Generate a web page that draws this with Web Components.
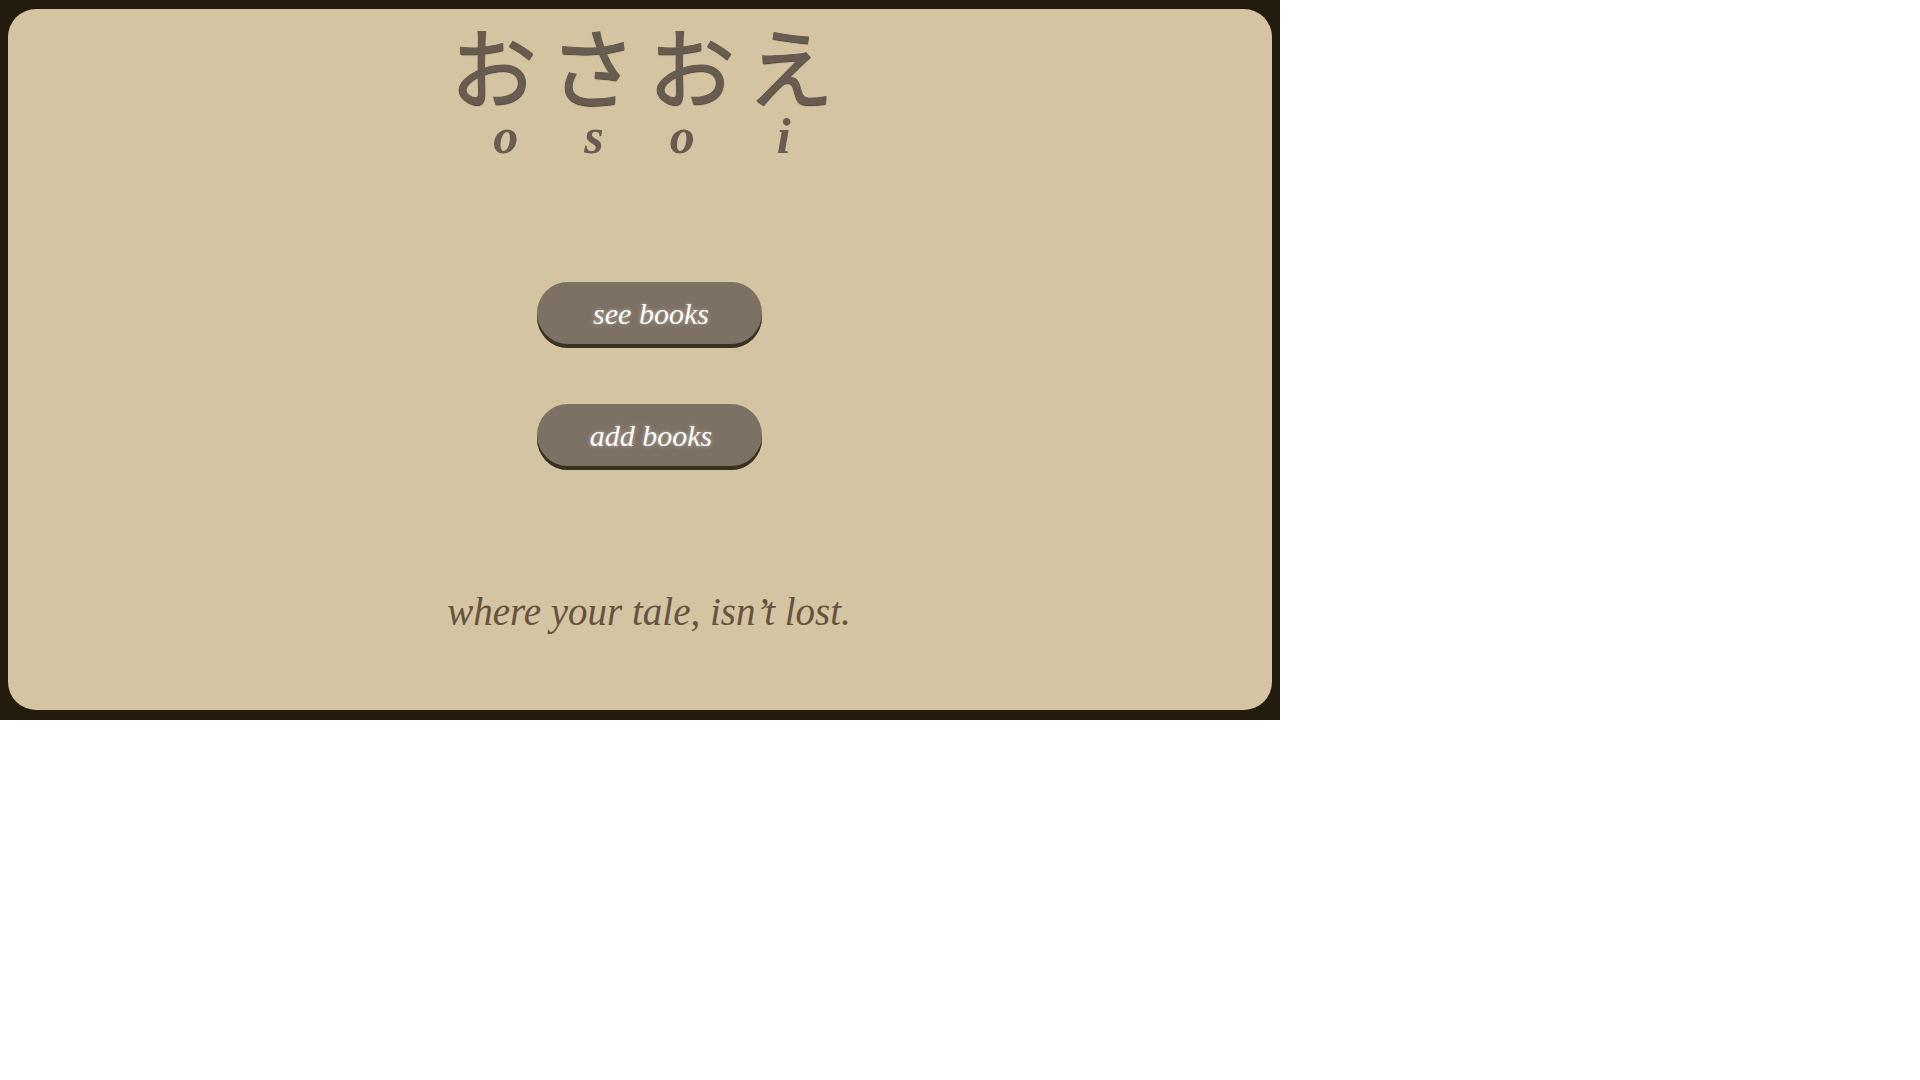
<!DOCTYPE html>
<html lang="ja">
<head>
<meta charset="utf-8">
<title>osoi</title>
<style>
body { margin: 0; background: #fff; font-family: "Liberation Serif", "Noto Sans CJK JP", serif; }
</style>
</head>
<body>
<book-stage>
  <brand-title></brand-title>
  <pill-button>see books</pill-button>
  <pill-button>add books</pill-button>
  <tag-line>where your tale, isn’t lost.</tag-line>
</book-stage>
<script>
const define = (name, html) => customElements.define(name, class extends HTMLElement {
  constructor() {
    super();
    this.attachShadow({ mode: "open" }).innerHTML = html;
  }
});

define("book-stage", `<style>
:host { display: block; box-sizing: border-box; width: calc(100vw * 2 / 3); aspect-ratio: 16 / 9; padding: 9px 8px 10px; background: #231b0d; }
main { box-sizing: border-box; display: flex; flex-direction: column; align-items: center; height: 100%; padding-top: 24px; border-radius: 28px; background: #d5c4a1; }
::slotted(brand-title) { margin-bottom: 120px; }
::slotted(pill-button) { margin-bottom: 56px; margin-left: 18px; }
::slotted(tag-line) { margin-top: 64px; margin-left: 18px; }
</style><main><slot></slot></main>`);

define("brand-title", `<style>
:host { display: block; color: #685b50; }
h1 { margin: 0; padding-left: 4px; font-weight: inherit; }
.kana, .latin { display: flex; }
.kana { gap: 12px; font: 400 87px/77px "Liberation Sans", "Noto Sans CJK JP", sans-serif; -webkit-text-stroke: 1px #685b50; text-shadow: 0 1px 1px #3c3029; }
.latin { justify-content: center; gap: 66px; font: italic bold 50px/52px "Liberation Serif", serif; }
.latin span:last-child { margin-left: 16px; }
</style><h1>
<span class="kana"><span>お</span><span>さ</span><span>お</span><span>え</span></span>
<span class="latin"><span>o</span><span>s</span><span>o</span><span>i</span></span>
</h1>`);

define("pill-button", `<style>
:host { display: block; }
button { display: block; width: 225px; height: 66px; padding: 0 0 2px 4px; border: 0; border-radius: 31px; background: #7d7064; box-shadow: inset 0 -4px #3b3024; color: #fff; font: italic 30px/36px "Liberation Serif", serif; text-shadow: 0 0 4px #b8ada2; cursor: pointer; }
</style><button type="button"><slot></slot></button>`);

define("tag-line", `<style>
:host { display: block; color: #65523f; font: italic 39px/44px "Liberation Serif", serif; }
p { margin: 0; }
</style><p><slot></slot></p>`);
</script>
</body>
</html>
